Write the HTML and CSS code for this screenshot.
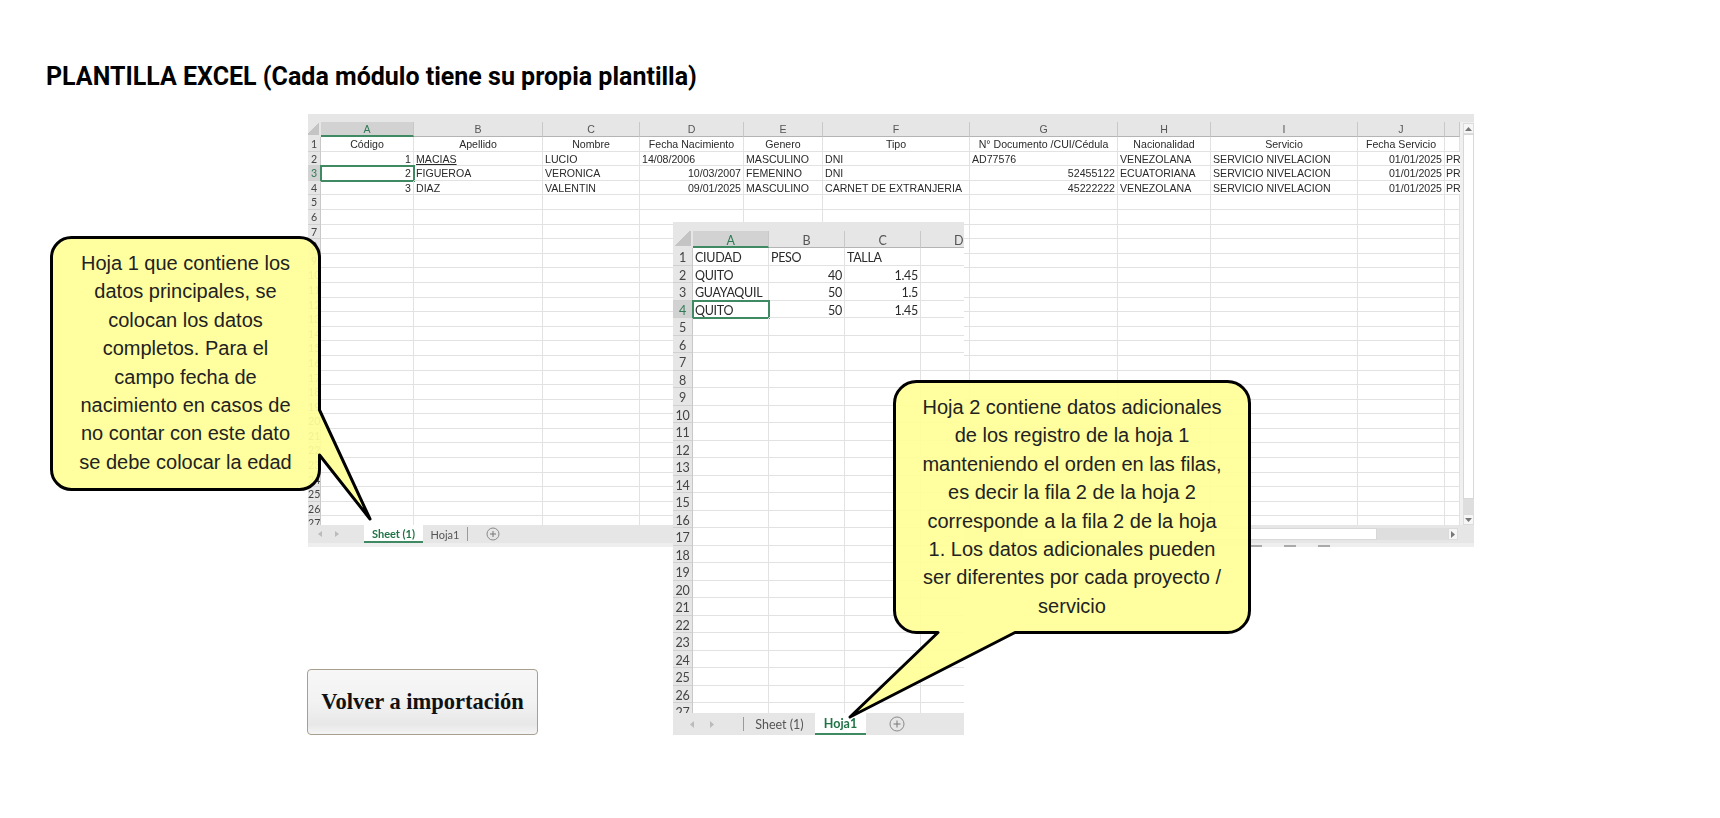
FILE: index.html
```html
<!DOCTYPE html>
<html lang="es">
<head>
<meta charset="utf-8">
<title>Plantilla Excel</title>
<link rel="stylesheet" href="styles.css">
</head>
<body>
<main class="page">
  <h1 class="title">PLANTILLA EXCEL (Cada módulo tiene su propia plantilla)</h1>

  <section class="sheet sheet-main">
    <div class="strip"></div>
    <div class="sheet-body">
      <div class="grid grid-main">
        <span class="corner"></span><span class="col sel">A</span><span class="col">B</span><span class="col">C</span><span class="col">D</span><span class="col">E</span><span class="col">F</span><span class="col">G</span><span class="col">H</span><span class="col">I</span><span class="col">J</span><span class="col"></span>
        <span class="rh">1</span><span class="ctr">Código</span><span class="ctr">Apellido</span><span class="ctr">Nombre</span><span class="ctr">Fecha Nacimiento</span><span class="ctr">Genero</span><span class="ctr">Tipo</span><span class="ctr">N° Documento /CUI/Cédula</span><span class="ctr">Nacionalidad</span><span class="ctr">Servicio</span><span class="ctr">Fecha Servicio</span><span></span>
        <span class="rh">2</span><span class="num">1</span><span class="und">MACIAS</span><span>LUCIO</span><span>14/08/2006</span><span>MASCULINO</span><span>DNI</span><span>AD77576</span><span>VENEZOLANA</span><span>SERVICIO NIVELACION</span><span class="num">01/01/2025</span><span class="clip">PR</span>
        <span class="rh sel">3</span><span class="num cur">2</span><span>FIGUEROA</span><span>VERONICA</span><span class="num">10/03/2007</span><span>FEMENINO</span><span>DNI</span><span class="num">52455122</span><span>ECUATORIANA</span><span>SERVICIO NIVELACION</span><span class="num">01/01/2025</span><span class="clip">PR</span>
        <span class="rh">4</span><span class="num">3</span><span>DIAZ</span><span>VALENTIN</span><span class="num">09/01/2025</span><span>MASCULINO</span><span>CARNET DE EXTRANJERIA</span><span class="num">45222222</span><span>VENEZOLANA</span><span>SERVICIO NIVELACION</span><span class="num">01/01/2025</span><span class="clip">PR</span>
        <span class="rh">5</span><span></span><span></span><span></span><span></span><span></span><span></span><span></span><span></span><span></span><span></span><span></span>
        <span class="rh">6</span><span></span><span></span><span></span><span></span><span></span><span></span><span></span><span></span><span></span><span></span><span></span>
        <span class="rh">7</span><span></span><span></span><span></span><span></span><span></span><span></span><span></span><span></span><span></span><span></span><span></span>
        <span class="rh">8</span><span></span><span></span><span></span><span></span><span></span><span></span><span></span><span></span><span></span><span></span><span></span>
        <span class="rh">9</span><span></span><span></span><span></span><span></span><span></span><span></span><span></span><span></span><span></span><span></span><span></span>
        <span class="rh">10</span><span></span><span></span><span></span><span></span><span></span><span></span><span></span><span></span><span></span><span></span><span></span>
        <span class="rh">11</span><span></span><span></span><span></span><span></span><span></span><span></span><span></span><span></span><span></span><span></span><span></span>
        <span class="rh">12</span><span></span><span></span><span></span><span></span><span></span><span></span><span></span><span></span><span></span><span></span><span></span>
        <span class="rh">13</span><span></span><span></span><span></span><span></span><span></span><span></span><span></span><span></span><span></span><span></span><span></span>
        <span class="rh">14</span><span></span><span></span><span></span><span></span><span></span><span></span><span></span><span></span><span></span><span></span><span></span>
        <span class="rh">15</span><span></span><span></span><span></span><span></span><span></span><span></span><span></span><span></span><span></span><span></span><span></span>
        <span class="rh">16</span><span></span><span></span><span></span><span></span><span></span><span></span><span></span><span></span><span></span><span></span><span></span>
        <span class="rh">17</span><span></span><span></span><span></span><span></span><span></span><span></span><span></span><span></span><span></span><span></span><span></span>
        <span class="rh">18</span><span></span><span></span><span></span><span></span><span></span><span></span><span></span><span></span><span></span><span></span><span></span>
        <span class="rh">19</span><span></span><span></span><span></span><span></span><span></span><span></span><span></span><span></span><span></span><span></span><span></span>
        <span class="rh">20</span><span></span><span></span><span></span><span></span><span></span><span></span><span></span><span></span><span></span><span></span><span></span>
        <span class="rh">21</span><span></span><span></span><span></span><span></span><span></span><span></span><span></span><span></span><span></span><span></span><span></span>
        <span class="rh">22</span><span></span><span></span><span></span><span></span><span></span><span></span><span></span><span></span><span></span><span></span><span></span>
        <span class="rh">23</span><span></span><span></span><span></span><span></span><span></span><span></span><span></span><span></span><span></span><span></span><span></span>
        <span class="rh">24</span><span></span><span></span><span></span><span></span><span></span><span></span><span></span><span></span><span></span><span></span><span></span>
        <span class="rh">25</span><span></span><span></span><span></span><span></span><span></span><span></span><span></span><span></span><span></span><span></span><span></span>
        <span class="rh">26</span><span></span><span></span><span></span><span></span><span></span><span></span><span></span><span></span><span></span><span></span><span></span>
        <span class="rh">27</span><span></span><span></span><span></span><span></span><span></span><span></span><span></span><span></span><span></span><span></span><span></span>
      </div>
      <div class="vscroll">
        <span class="vbtn"><svg width="7" height="4" viewBox="0 0 7 4"><polygon points="3.5,0 7,4 0,4" fill="#777"/></svg></span>
        <span class="vthumb"></span>
        <span class="vtrack"></span>
        <span class="vbtn"><svg width="7" height="4" viewBox="0 0 7 4"><polygon points="0,0 7,0 3.5,4" fill="#777"/></svg></span>
      </div>
    </div>
    <div class="tabbar tabbar-main">
      <div class="nav nav-main">
        <svg width="4" height="6" viewBox="0 0 4 6"><polygon points="4,0 4,6 0,3" fill="#bbb"/></svg>
        <svg width="4" height="6" viewBox="0 0 4 6"><polygon points="0,0 0,6 4,3" fill="#bbb"/></svg>
      </div>
      <span class="tab active tab-sheet">Sheet (1)</span>
      <span class="tab tab-hoja">Hoja1</span>
      <span class="tab-sep"></span>
      <svg class="plus" width="14" height="14" viewBox="0 0 14 14"><circle cx="7" cy="7" r="6" fill="none" stroke="#8a8a8a"/><path d="M4 7h6M7 4v6" stroke="#777"/></svg>
      <div class="hscroll">
        <span class="hthumb"></span>
        <span class="htrack"></span>
        <span class="hbtn"><svg width="4" height="7" viewBox="0 0 4 7"><polygon points="0,0 0,7 4,3.5" fill="#777"/></svg></span>
      </div>
    </div>
    <div class="status"><span></span><span></span><span></span></div>
  </section>

  <section class="sheet sheet-extra">
    <div class="strip"></div>
    <div class="sheet-body">
      <div class="grid grid-extra">
        <span class="corner"></span><span class="col sel">A</span><span class="col">B</span><span class="col">C</span><span class="col">D</span>
        <span class="rh">1</span><span>CIUDAD</span><span>PESO</span><span>TALLA</span><span></span>
        <span class="rh">2</span><span>QUITO</span><span class="num">40</span><span class="num">1.45</span><span></span>
        <span class="rh">3</span><span>GUAYAQUIL</span><span class="num">50</span><span class="num">1.5</span><span></span>
        <span class="rh sel">4</span><span class="cur">QUITO</span><span class="num">50</span><span class="num">1.45</span><span></span>
        <span class="rh">5</span><span></span><span></span><span></span><span></span>
        <span class="rh">6</span><span></span><span></span><span></span><span></span>
        <span class="rh">7</span><span></span><span></span><span></span><span></span>
        <span class="rh">8</span><span></span><span></span><span></span><span></span>
        <span class="rh">9</span><span></span><span></span><span></span><span></span>
        <span class="rh">10</span><span></span><span></span><span></span><span></span>
        <span class="rh">11</span><span></span><span></span><span></span><span></span>
        <span class="rh">12</span><span></span><span></span><span></span><span></span>
        <span class="rh">13</span><span></span><span></span><span></span><span></span>
        <span class="rh">14</span><span></span><span></span><span></span><span></span>
        <span class="rh">15</span><span></span><span></span><span></span><span></span>
        <span class="rh">16</span><span></span><span></span><span></span><span></span>
        <span class="rh">17</span><span></span><span></span><span></span><span></span>
        <span class="rh">18</span><span></span><span></span><span></span><span></span>
        <span class="rh">19</span><span></span><span></span><span></span><span></span>
        <span class="rh">20</span><span></span><span></span><span></span><span></span>
        <span class="rh">21</span><span></span><span></span><span></span><span></span>
        <span class="rh">22</span><span></span><span></span><span></span><span></span>
        <span class="rh">23</span><span></span><span></span><span></span><span></span>
        <span class="rh">24</span><span></span><span></span><span></span><span></span>
        <span class="rh">25</span><span></span><span></span><span></span><span></span>
        <span class="rh">26</span><span></span><span></span><span></span><span></span>
        <span class="rh">27</span><span></span><span></span><span></span><span></span>
      </div>
    </div>
    <div class="tabbar tabbar-extra">
      <div class="nav nav-extra">
        <svg width="4" height="7" viewBox="0 0 4 7"><polygon points="4,0 4,7 0,3.5" fill="#bbb"/></svg>
        <svg width="4" height="7" viewBox="0 0 4 7"><polygon points="0,0 0,7 4,3.5" fill="#bbb"/></svg>
      </div>
      <span class="tab-sep"></span>
      <span class="tab tab-sheet2">Sheet (1)</span>
      <span class="tab active tab-hoja2">Hoja1</span>
      <svg class="plus plus-extra" width="16" height="16" viewBox="0 0 16 16"><circle cx="8" cy="8" r="7" fill="none" stroke="#8a8a8a"/><path d="M4.5 8h7M8 4.5v7" stroke="#777"/></svg>
    </div>
  </section>

  <aside class="callout callout-one">
    <svg class="bubble" width="271" height="255" viewBox="0 0 271 255">
      <path d="M21.5 1.5H249.5A20 20 0 0 1 269.5 21.5V174L320 283L269.5 219V233.5A20 20 0 0 1 249.5 253.5H21.5A20 20 0 0 1 1.5 233.5V21.5A20 20 0 0 1 21.5 1.5Z"/>
    </svg>
    <p>Hoja 1 que contiene los<br>datos principales, se<br>colocan los datos<br>completos. Para el<br>campo fecha de<br>nacimiento en casos de<br>no contar con este dato<br>se debe colocar la edad</p>
  </aside>

  <aside class="callout callout-two">
    <svg class="bubble" width="358" height="254" viewBox="0 0 358 254">
      <path d="M23.5 1.5H334.5A22 22 0 0 1 356.5 23.5V230.5A22 22 0 0 1 334.5 252.5H122L-43 337L45 252.5H23.5A22 22 0 0 1 1.5 230.5V23.5A22 22 0 0 1 23.5 1.5Z"/>
    </svg>
    <p>Hoja 2 contiene datos adicionales<br>de los registro de la hoja 1<br>manteniendo el orden en las filas,<br>es decir la fila 2 de la hoja 2<br>corresponde a la fila 2 de la hoja<br>1. Los datos adicionales pueden<br>ser diferentes por cada proyecto /<br>servicio</p>
  </aside>

  <button class="back" type="button">Volver a importación</button>
</main>
</body>
</html>
```
FILE: styles.css
```css
* { box-sizing: border-box; }

html, body {
  margin: 0;
  background: #fff;
}

.page {
  position: relative;
  height: 818px;
  overflow: hidden;
  padding-top: 63px;
}

.title {
  margin: 0 0 0 46px;
  font: 700 25px/28px Roboto, sans-serif;
  color: #000;
}

.back {
  display: block;
  width: 231px;
  height: 66px;
  margin: 578px 0 0 307px;
  padding: 0;
  border: 1px solid #a89f8f;
  border-radius: 4px;
  background: linear-gradient(#f7f7f7 0%, #f2f2f2 50%, #e8e8e8 85%, #f4f4f4 100%);
  font: 700 22.5px "Liberation Serif", serif;
  color: #111;
}

/* Spreadsheet pictures sit overlapped on the page */
.sheet {
  position: absolute;
  display: flex;
  flex-direction: column;
  background: #e6e6e6;
  filter: blur(0.35px);
  color: #2a2a2a;
}

.sheet-main {
  left: 308px;
  top: 114px;
  width: 1166px;
  height: 433px;
}

.sheet-extra {
  left: 673px;
  top: 222px;
  width: 291px;
  height: 513px;
}

.strip {
  flex: 0 0 9px;
  background: #e6e6e6;
}

.sheet-main .strip { flex-basis: 8px; }

.sheet-body {
  flex: 1 1 0;
  display: flex;
  min-height: 0;
  overflow: hidden;
}

.grid {
  display: grid;
  background: #fff;
  overflow: hidden;
  align-content: start;
}

.grid > span {
  display: block;
  padding: 0 2px;
  white-space: nowrap;
  overflow: hidden;
  border-right: 1px solid #e2e2e2;
  border-bottom: 1px solid #e2e2e2;
}

.grid-main {
  flex: 0 0 1152px;
  grid-template-columns: 13px 93px 129px 97px 104px 79px 147px 148px 93px 147px 87px 15px;
  grid-template-rows: 15px;
  grid-auto-rows: 14.6px;
  font: 10.6px/14px "Liberation Sans", sans-serif;
}

.grid-extra {
  flex: 0 0 367px;
  grid-template-columns: 20px 76px 76px 76px 76px;
  grid-template-rows: 17px;
  grid-auto-rows: 17.5px;
  font: 12.5px/17px Lato, sans-serif;
  letter-spacing: -0.3px;
}

.grid-extra > span { padding-top: 1px; }

.grid > .col {
  background: #e6e6e6;
  border-right-color: #c8c8c8;
  border-bottom-color: #b4b4b4;
  text-align: center;
  color: #555;
}

.grid > .col.sel {
  background: #d2d2d2;
  border-bottom: 2px solid #3f8a63;
  color: #2f7a55;
}

.grid > .corner {
  padding: 0;
  background: linear-gradient(135deg, #e6e6e6 50%, #c4c4c4 50%);
  border: 0;
  border-right: 2px solid #e6e6e6;
  border-bottom: 2px solid #e6e6e6;
}

.grid > .rh {
  padding-left: 0;
  padding-right: 0;
  background: #e6e6e6;
  border-right-color: #c8c8c8;
  border-bottom-color: #d0d0d0;
  text-align: center;
  font-family: Lato, sans-serif;
  color: #444;
}

.grid > .rh.sel {
  background: #d2d2d2;
  color: #2f7a55;
}

.grid > .ctr { text-align: center; }
.grid > .num { text-align: right; }
.grid > .und { text-decoration: underline; }
.grid > .clip { padding: 0 0 0 1px; border-right: 0; }

.grid > .cur {
  overflow: visible;
  outline: 2px solid #3f8a63;
  outline-offset: -1px;
}

.vscroll {
  flex: 1 1 0;
  display: flex;
  flex-direction: column;
  padding: 1px 0 0 3px;
  background: #f0f0f0;
}

.vbtn {
  flex: 0 0 11px;
  display: flex;
  align-items: center;
  justify-content: center;
  background: #f6f6f6;
  border: 1px solid #dcdcdc;
}

.vthumb {
  flex: 0 0 365px;
  background: #fff;
  border: 1px solid #d8d8d8;
}

.vtrack {
  flex: 1 1 0;
  background: #dedede;
}

.tabbar {
  display: flex;
  align-items: center;
  background: #e6e6e6;
  font-family: Lato, "Liberation Sans", sans-serif;
}

.tabbar-main {
  flex: 0 0 18px;
  font-size: 11px;
}

.tabbar-extra {
  flex: 0 0 22px;
  font-size: 12.5px;
}

.nav {
  display: flex;
  align-items: center;
}

.nav-main {
  flex: 0 0 56px;
  gap: 13px;
  padding-left: 10px;
}

.nav-extra {
  flex: 0 0 70px;
  gap: 16px;
  padding-left: 17px;
}

.tab {
  align-self: stretch;
  display: flex;
  align-items: center;
  justify-content: center;
  color: #555;
}

.tab.active {
  background: #fff;
  border-bottom: 2px solid #3f8a63;
  font-weight: 700;
  color: #217346;
}

.tab-sheet { flex: 0 0 59px; }
.tab-hoja { flex: 0 0 44px; }
.tab-sheet2 { flex: 0 0 71px; }
.tab-hoja2 { flex: 0 0 51px; }

.tab-sep {
  flex: 0 0 1px;
  height: 14px;
  background: #9a9a9a;
}

.plus {
  flex: none;
  margin-left: 18px;
}

.plus-extra { margin-left: 23px; }

.hscroll {
  display: flex;
  align-items: center;
  height: 12px;
  margin-left: 522px;
}

.hthumb {
  flex: 0 0 355px;
  height: 12px;
  background: #fff;
  border: 1px solid #d8d8d8;
}

.htrack {
  flex: 0 0 71px;
  height: 12px;
  background: #dedede;
}

.hbtn {
  flex: 0 0 10px;
  display: flex;
  align-items: center;
  justify-content: center;
  height: 12px;
  background: #f6f6f6;
  border: 1px solid #dcdcdc;
}

.status {
  flex: 0 0 4px;
  display: flex;
  gap: 22px;
  justify-content: flex-end;
  padding-right: 144px;
  background: #eeeeee;
}

.status > span {
  width: 12px;
  height: 2px;
  margin-top: 2px;
  background: #aaa;
}

/* Speech bubbles */
.callout {
  position: absolute;
  display: flex;
  justify-content: center;
}

.callout-one {
  left: 50px;
  top: 236px;
  width: 271px;
  height: 255px;
  padding-top: 13px;
}

.callout-two {
  left: 893px;
  top: 380px;
  width: 358px;
  height: 254px;
  padding-top: 13px;
}

.bubble {
  position: absolute;
  left: 0;
  top: 0;
  overflow: visible;
}

.bubble path {
  fill: #ffff99;
  fill-opacity: 0.93;
  stroke: #000;
  stroke-width: 3;
  stroke-linejoin: round;
}

.callout p {
  position: relative;
  margin: 0;
  text-align: center;
  font: 20px/28.4px "Liberation Sans", sans-serif;
  color: #222;
}
```
